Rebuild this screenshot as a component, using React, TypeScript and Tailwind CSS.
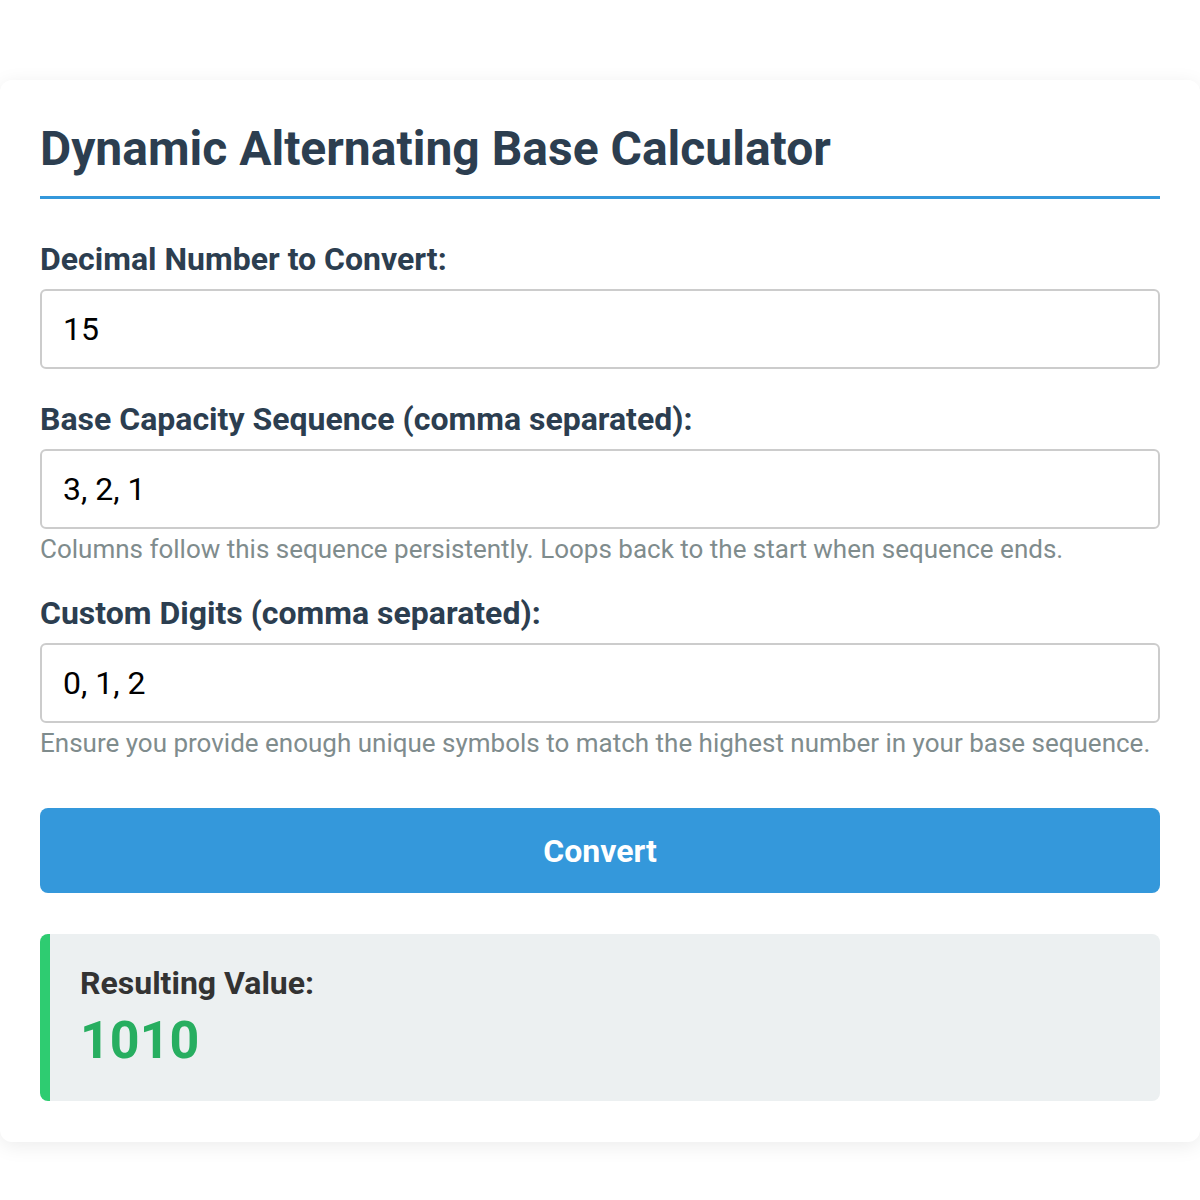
import React from "react";

export default function App() {
  return (
    <div className="min-h-[1200px] bg-white pt-[80px]" style={{ fontFamily: "Roboto, 'Liberation Sans', sans-serif" }}>
      <div className="bg-white rounded-[12px] shadow-[0_4px_20px_rgba(0,0,0,0.08)] px-[40px] pt-[42px] pb-[41px]">
        <h1 className="text-[48px] leading-[53px] font-bold text-[#2c3e50] pb-[21px] border-b-[3px] border-[#3498db]">
          Dynamic Alternating Base Calculator
        </h1>
        <div className="mt-[43px]">
          <label className="block text-[32px] leading-[34px] font-bold text-[#2c3e50] mb-[13px]">Decimal Number to Convert:</label>
          <div className="h-[80px] border-2 border-[#cccccc] rounded-[6px] flex items-center px-[21px] text-[32px] text-black">15</div>
        </div>
        <div className="mt-[33px]">
          <label className="block text-[32px] leading-[34px] font-bold text-[#2c3e50] mb-[13px]">Base Capacity Sequence (comma separated):</label>
          <div className="h-[80px] border-2 border-[#cccccc] rounded-[6px] flex items-center px-[21px] text-[32px] text-black">3, 2, 1</div>
          <p className="text-[26px] leading-[29px] text-[#7f8c8d] mt-[6px]">Columns follow this sequence persistently. Loops back to the start when sequence ends.</p>
        </div>
        <div className="mt-[32px]">
          <label className="block text-[32px] leading-[34px] font-bold text-[#2c3e50] mb-[13px]">Custom Digits (comma separated):</label>
          <div className="h-[80px] border-2 border-[#cccccc] rounded-[6px] flex items-center px-[21px] text-[32px] text-black">0, 1, 2</div>
          <p className="text-[26px] leading-[29px] text-[#7f8c8d] mt-[6px]">Ensure you provide enough unique symbols to match the highest number in your base sequence.</p>
        </div>
        <button className="mt-[50px] w-full h-[85px] bg-[#3498db] rounded-[8px] text-white text-[32px] font-bold">Convert</button>
        <div className="mt-[41px] bg-[#ecf0f1] rounded-[8px] border-l-[10px] border-[#2ecc71] pl-[30px] pt-[31px] h-[167px]">
          <div className="text-[32px] leading-[36px] font-bold text-[#333333]">Resulting Value:</div>
          <div className="text-[52px] leading-[62px] font-bold text-[#27ae60] mt-[9px]">1010</div>
        </div>
      </div>
    </div>
  );
}
